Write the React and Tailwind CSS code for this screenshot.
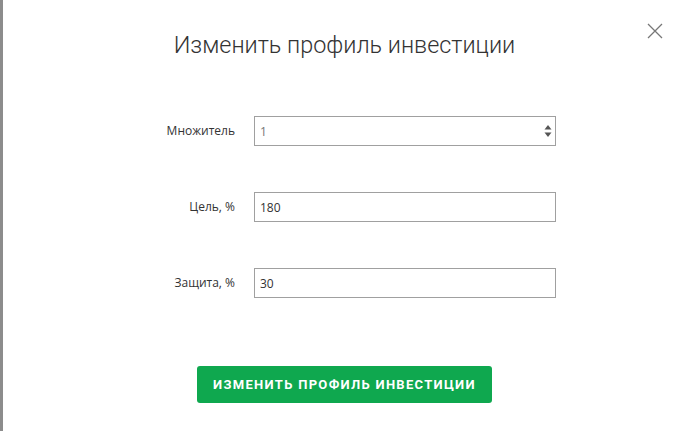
import { useState } from "react";

function Field({ label, value, muted, spinner, onChange }) {
  return (
    <div className="flex items-center gap-[19px]">
      <label className="w-[100px] text-right text-[12px] text-[#333]">{label}</label>
      <div className="relative">
        <input
          type="text"
          value={value}
          onChange={onChange}
          className={
            "w-[302px] h-[30px] border border-[#a0a0a0] px-[5px] text-[12px] outline-none " +
            (muted ? "text-[#777]" : "text-[#333]")
          }
        />
        {spinner && (
          <svg
            className="absolute right-[4px] top-[8px]"
            width="8"
            height="14"
            viewBox="0 0 8 14"
          >
            <path d="M4 1 L7.5 5.5 L0.5 5.5 Z" fill="#555" />
            <path d="M4 13 L7.5 8.5 L0.5 8.5 Z" fill="#555" />
          </svg>
        )}
      </div>
    </div>
  );
}

export default function App() {
  const [mult, setMult] = useState("1");
  const [target, setTarget] = useState("180");
  const [guard, setGuard] = useState("30");

  return (
    <div className="flex h-[431px] w-[686px] bg-white" style={{ fontFamily: "'Open Sans', sans-serif" }}>
      <div className="w-[3px] bg-[#8c8c8c]" />
      <div className="relative flex-1 flex flex-col items-center">
        <button className="absolute right-[21px] top-[21px] text-[#777]">
          <svg width="20" height="20" viewBox="0 0 20 20">
            <path d="M3 3 L17 17 M17 3 L3 17" stroke="#777" strokeWidth="1.3" fill="none" />
          </svg>
        </button>

        <h2
          className="mt-[30px] text-[23.4px] font-light leading-[30px] text-[#333]"
          style={{ fontFamily: "Roboto, sans-serif" }}
        >
          Изменить профиль инвестиции
        </h2>

        <div className="mt-[56px] flex flex-col gap-[46px] translate-x-[1px]">
          <Field label="Множитель" value={mult} muted spinner onChange={(e) => setMult(e.target.value)} />
          <Field label="Цель, %" value={target} onChange={(e) => setTarget(e.target.value)} />
          <Field label="Защита, %" value={guard} onChange={(e) => setGuard(e.target.value)} />
        </div>

        <button
          className="mt-[68px] h-[37px] w-[295px] rounded-[3px] bg-[#0fa84f] text-[13px] font-bold uppercase tracking-[1.3px] text-white"
          style={{ fontFamily: "Roboto, sans-serif" }}
        >
          Изменить профиль инвестиции
        </button>
      </div>
    </div>
  );
}
